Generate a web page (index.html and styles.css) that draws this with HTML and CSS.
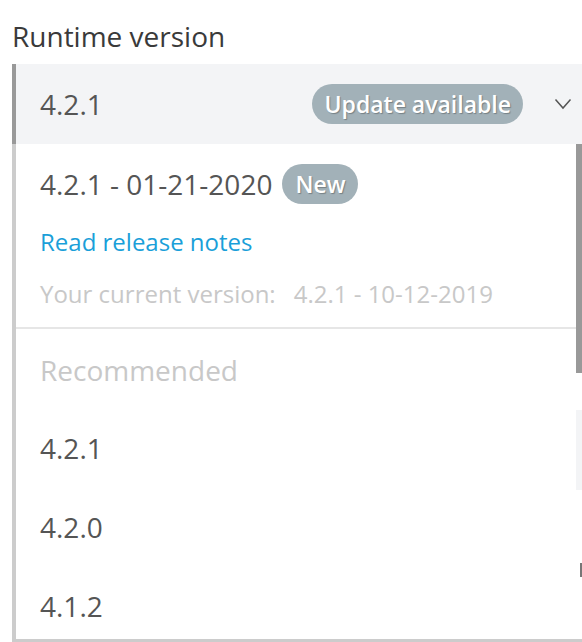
FILE: index.html
```html
<!DOCTYPE html>
<html>
<head>
<meta charset="utf-8">
<link rel="stylesheet" href="styles.css">
</head>
<body>
<div class="field">
  <div class="label">Runtime version</div>
  <div class="select">
    <div class="select-head">
      <span class="value">4.2.1</span>
      <span class="badge badge-update">Update available</span>
      <svg class="chevron" width="18" height="12" viewBox="0 0 18 12"><path d="M1.5 1.5 L9 10 L16.5 1.5" fill="none" stroke="#555" stroke-width="1.5"/></svg>
    </div>
    <div class="menu">
      <div class="menu-body">
        <div class="latest">
          <div class="latest-title"><span>4.2.1 - 01-21-2020</span><span class="badge badge-new">New</span></div>
          <a class="link">Read release notes</a>
          <div class="current"><span>Your current version:</span><span class="current-ver">4.2.1 - 10-12-2019</span></div>
        </div>
        <div class="group">
          <div class="group-title">Recommended</div>
          <div class="option">4.2.1</div>
          <div class="option">4.2.0</div>
          <div class="option">4.1.2</div>
        </div>
      </div>
      <div class="scroll">
        <div class="thumb"></div>
        <div class="peek"></div>
        <div class="peek-line"></div>
      </div>
    </div>
  </div>
</div>
</body>
</html>
```

FILE: styles.css
```css
html, body {
  margin: 0;
  padding: 0;
  background: #fff;
  overflow: hidden;
}
body {
  font-family: "Open Sans", "Liberation Sans", sans-serif;
  color: #555;
}
.field {
  padding: 17px 0 0 12px;
}
.label {
  font-size: 28px;
  line-height: 38px;
  color: #3a3a3a;
  margin-bottom: 9px;
}
.select {
  width: 570px;
}
.select-head {
  height: 80px;
  box-sizing: border-box;
  border-left: 4px solid #999;
  background: #f3f4f6;
  display: flex;
  align-items: center;
  padding: 0 10px 0 24px;
}
.value {
  font-size: 28px;
  flex: 1;
}
.badge {
  display: inline-flex;
  align-items: center;
  height: 40px;
  border-radius: 20px;
  background: #a2b1b8;
  color: #fff;
  font-size: 23px;
  font-weight: 600;
  text-shadow: 1px 1px 1px rgba(0,0,0,0.28);
  box-sizing: border-box;
}
.badge-update {
  padding: 0 12px;
  margin-right: 31px;
}
.badge-new {
  padding: 0 13px;
  margin-left: 10px;
}
.chevron {
  display: block;
}
.menu {
  display: flex;
  height: 498px;
  box-sizing: border-box;
  border-left: 4px solid #ccc;
  border-bottom: 3px solid #ccc;
  overflow: hidden;
}
.menu-body {
  flex: 1;
  padding-left: 24px;
}
.latest {
  padding: 20px 0 15px;
  border-bottom: 2px solid #e6e6e6;
  margin-left: -24px;
  padding-left: 24px;
}
.latest-title {
  display: flex;
  align-items: center;
  height: 40px;
  font-size: 28px;
}
.link {
  display: block;
  margin-top: 20px;
  line-height: 36px;
  font-size: 24px;
  color: #1a9fd9;
}
.current {
  margin-top: 16px;
  line-height: 36px;
  font-size: 24px;
  color: #c8c8c8;
  display: flex;
  gap: 18px;
}
.group {
  padding-top: 21px;
}
.group-title {
  font-size: 28px;
  line-height: 40px;
  color: #c8c8c8;
  margin-bottom: 19px;
}
.option {
  font-size: 28px;
  line-height: 79px;
  height: 79px;
}
.scroll {
  width: 6px;
  display: flex;
  flex-direction: column;
}
.thumb {
  height: 229px;
  background: #999;
}
.peek {
  margin-top: 37px;
  height: 80px;
  background: #f3f4f6;
}
.peek-line {
  margin-top: 73px;
  margin-left: 4px;
  width: 2px;
  height: 14px;
  background: #777;
}
```
